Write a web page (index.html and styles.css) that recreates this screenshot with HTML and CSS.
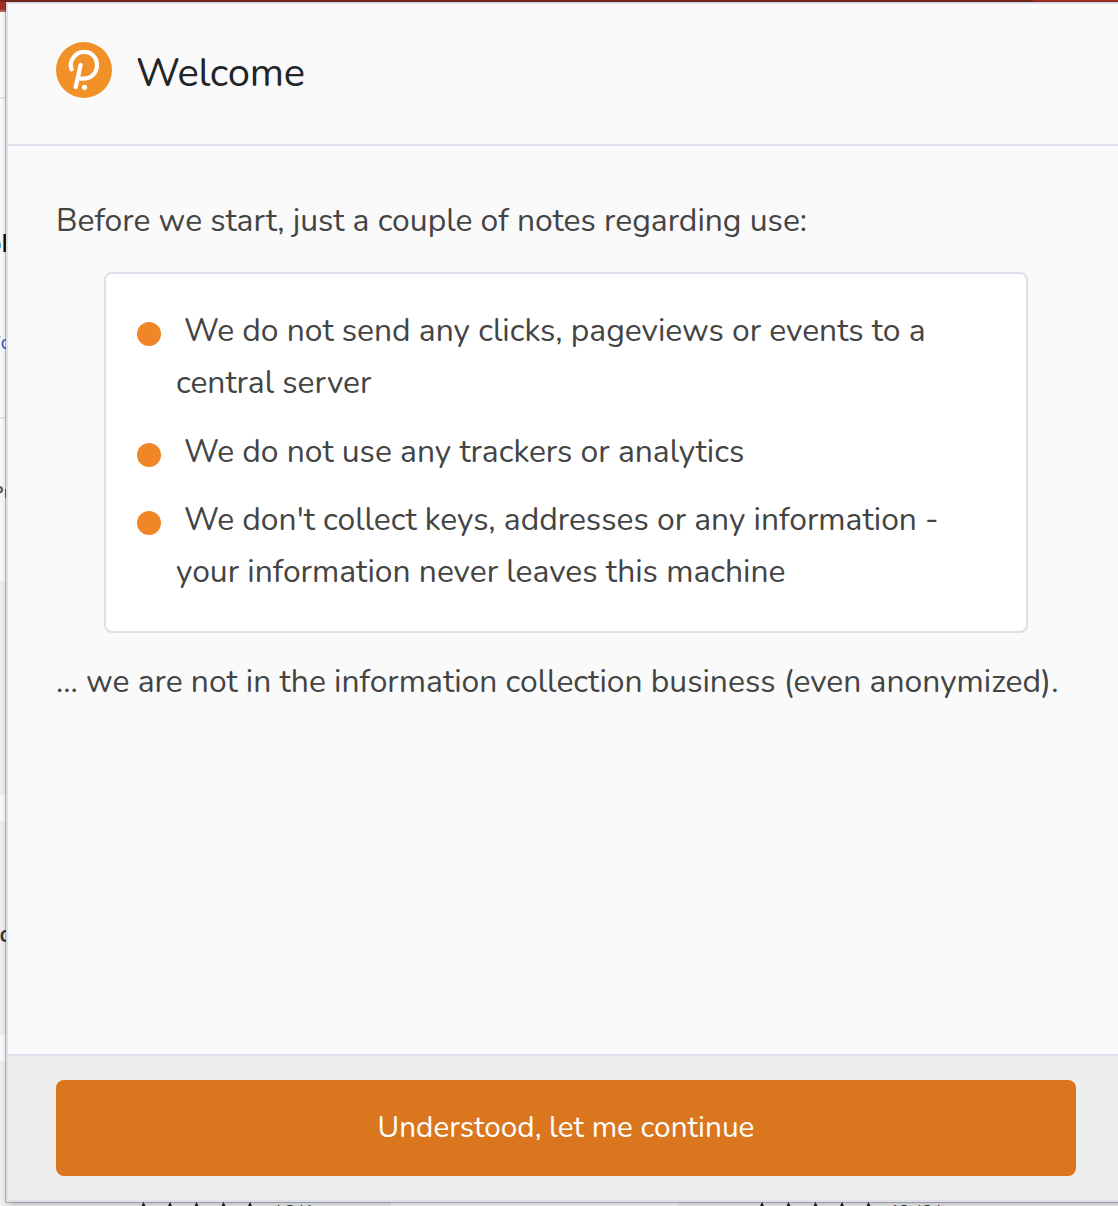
FILE: index.html
```html
<!DOCTYPE html>
<html lang="en">
<head>
<meta charset="utf-8">
<title>Welcome</title>
<link rel="stylesheet" href="styles.css">
</head>
<body>
<div class="backdrop" aria-hidden="true">
  <div class="topbar"></div>
  <div class="topshade"></div>
  <div class="band band-1"></div>
  <div class="band band-2"></div>
  <div class="band band-3"></div>
  <div class="rule rule-1"></div>
  <div class="rule rule-2"></div>
  <span class="peek peek-1">pl</span>
  <span class="peek peek-2">To</span>
  <span class="peek peek-3">Pr</span>
  <span class="peek peek-4">c</span>
  <div class="gap"></div>
  <svg class="stars" width="1118" height="6" viewBox="0 0 1118 6">
    <path d="M141 6l2.500-5 2.500 5zM167.500 6l2.500-5 2.500 5zM194 6l2.500-5 2.500 5zM221 6l2.500-5 2.500 5zM247.500 6l2.500-5 2.500 5zM759.500 6l2.500-5 2.500 5zM786 6l2.500-5 2.500 5zM813 6l2.500-5 2.500 5zM839.500 6l2.500-5 2.500 5zM866 6l2.500-5 2.500 5z"/>
  </svg>
  <span class="count count-1">4,341</span>
  <span class="count count-2">12,424</span>
</div>
<main class="modal">
  <header class="head">
    <svg class="logo" width="56" height="56" viewBox="0 0 56 56">
      <circle cx="28" cy="28" r="28" fill="#f19228"/>
      <path d="M15.600 27.400C14.200 24 14.800 19.500 17 16.200C19.600 12.200 23.500 9.900 28.200 9.900C35.400 9.900 41 15.500 41 23C41 31 35.500 36.600 27.500 36.600H23.200M24.600 23L19.700 45" fill="none" stroke="#fff" stroke-width="4.200" stroke-linecap="round"/>
      <circle cx="28.500" cy="45.300" r="2.600" fill="#fff"/>
    </svg>
    <h1 class="title">Welcome</h1>
  </header>
  <section class="content">
    <p class="text">Before we start, just a couple of notes regarding use:</p>
    <ul class="notes">
      <li class="note"><span class="line first">We do not send any clicks, pageviews or events to a</span><span class="line">central server</span></li>
      <li class="note"><span class="line first">We do not use any trackers or analytics</span></li>
      <li class="note"><span class="line first">We don't collect keys, addresses or any information -</span><span class="line">your information never leaves this machine</span></li>
    </ul>
    <p class="text">... we are not in the information collection business (even anonymized).</p>
  </section>
  <footer class="foot">
    <button class="confirm">Understood, let me continue</button>
  </footer>
</main>
</body>
</html>
```

FILE: styles.css
```css
* { box-sizing: border-box; }
body {
  margin: 0;
  position: relative;
  height: 1206px;
  overflow: hidden;
  padding: 2px 0 4px 6px;
  background: #fbfdfc;
  font-family: Nunito, Lato, "Noto Sans", sans-serif;
  color: #444;
}
.backdrop { position: absolute; inset: 0; overflow: hidden; }
.backdrop > * { position: absolute; }
.topbar { left: 0; top: 0; width: 1118px; height: 12px; background: #a63025; border-bottom: 2px solid #bd675f; }
.topshade { left: 0; top: 0; width: 1033px; height: 2px; background: #7c251e; }
.band { left: 0; width: 100%; background: #f1f3f2; }
.band-1 { top: 581px; height: 214px; }
.band-2 { top: 821px; height: 214px; }
.band-3 { top: 1061px; height: 145px; }
.rule { left: 0; width: 8px; height: 2px; background: #e7e9e8; }
.rule-1 { top: 97px; }
.rule-2 { top: 417px; }
.peek { line-height: 24px; white-space: nowrap; font-family: "Open Sans", sans-serif; }
.peek-1 { top: 231px; right: 1110px; font-size: 23px; font-weight: 600; color: #111; }
.peek-2 { top: 330px; right: 1106px; font-size: 19px; color: #2457c5; }
.peek-3 { top: 480px; right: 1107px; font-size: 17px; font-weight: 600; color: #555; }
.peek-4 { top: 922px; right: 1108px; font-size: 21px; font-weight: 600; color: #333; }
.gap { left: 391px; top: 1200px; width: 287px; height: 6px; background: #fff; }
.stars { left: 0; top: 1201px; fill: #222; }
.count { top: 1203px; font-size: 16px; line-height: 16px; color: #333; }
.count-1 { left: 272px; }
.count-2 { left: 890px; }

.modal {
  position: relative;
  display: flex;
  flex-direction: column;
  width: 1120px;
  height: 1200px;
  background: #fafafa;
  border: 2px solid #dedfeb;
  box-shadow: 0 0 0 1px rgba(0, 0, 0, .22), 0 4px 8px -1px rgba(0, 0, 0, .24);
}
.head {
  display: flex;
  align-items: center;
  gap: 24px;
  height: 142px;
  padding: 0 48px 8px;
  border-bottom: 2px solid #dedfeb;
}
.logo { flex: none; }
.title {
  margin: 5px 0 0;
  font-size: 40px;
  line-height: 52px;
  font-weight: 400;
  letter-spacing: -.25px;
  color: #212529;
}
.content { flex: 1; padding: 49px 48px 48px; }
.text, .line { font-size: 31.840px; line-height: 52px; white-space: nowrap; }
.text { margin: 0; }
.notes {
  display: flex;
  flex-direction: column;
  gap: 16.500px;
  width: 924px;
  height: 361px;
  margin: 25px 0 23px 48px;
  padding: 31px 31px 29px;
  list-style: none;
  background: #fff;
  border: 2px solid #dedfeb;
  border-radius: 8px;
}
.note { display: grid; grid-template-columns: 24px 1fr; column-gap: 15px; }
.note::before { content: ""; width: 24px; height: 24px; margin-top: 17px; border-radius: 50%; background: #f08627; }
.line { grid-column: 2; }
.first { padding-left: 8px; }
.foot { height: 146px; padding: 24px 48px; background: #eee; border-top: 2px solid #dedfeb; }
.confirm {
  display: block;
  width: 1020px;
  height: 96px;
  padding: 0 0 2px;
  border: 0;
  border-radius: 8px;
  background: #da771e;
  color: #fff;
  font: inherit;
  font-size: 29.760px;
}
```
